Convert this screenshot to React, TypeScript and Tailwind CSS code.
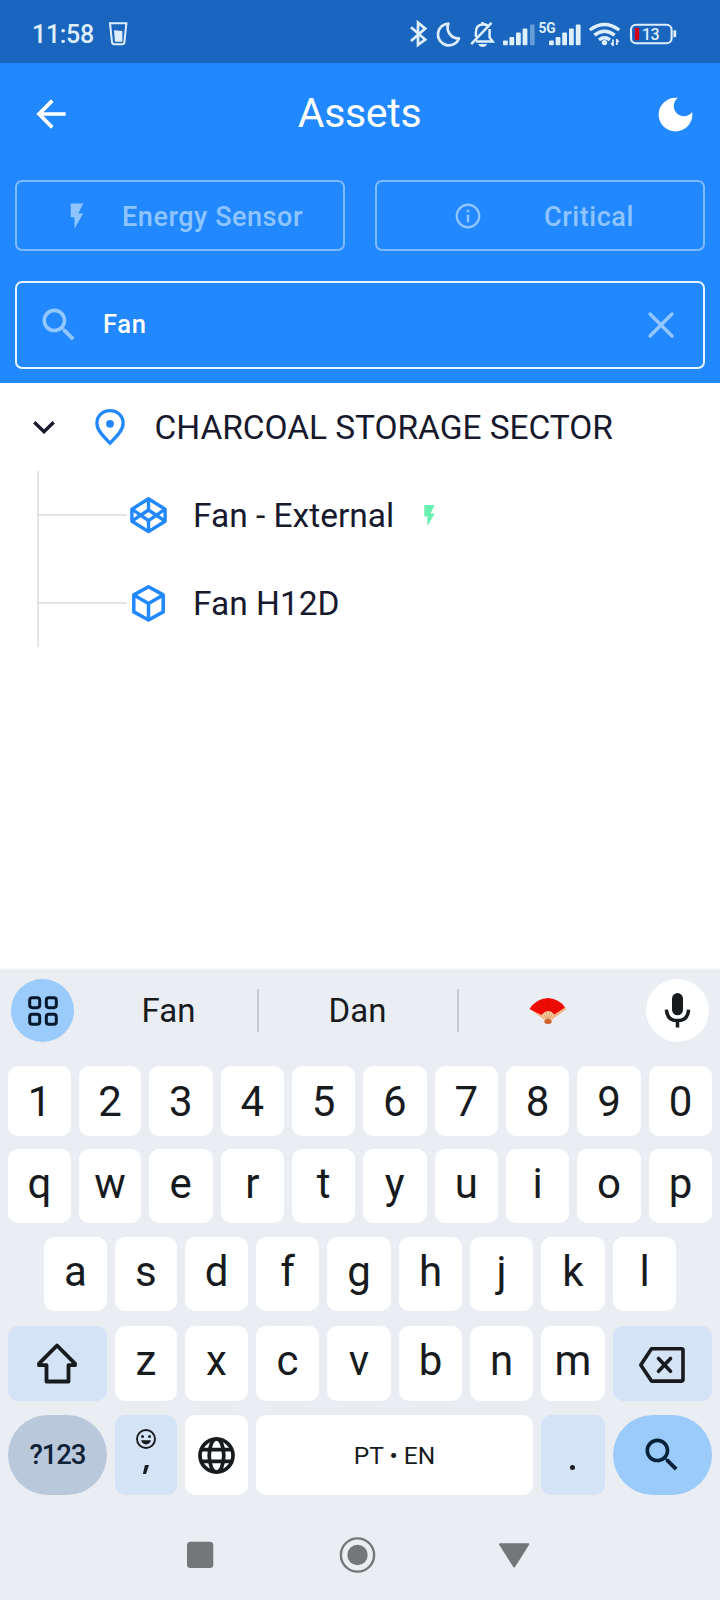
import React from "react";

function StatusBar() {
  return (
    <div className="flex h-[63px] items-start bg-[#1a66bf] pl-8 pt-4 text-[#dfeefc]">
      <span className="h-9 w-[63px] whitespace-nowrap text-[25px] font-medium leading-[38px] tracking-[-0.3px]">11:58</span>
      <svg className="ml-[10px]" width="26" height="36" viewBox="105 16 26 36" fill="none" stroke="currentColor">
        <path d="M110 23.2H126.4L124.4 42.2Q124.2 44.2 122 44.2H114.4Q112.2 44.2 112 42.2Z" strokeWidth="2" />
        <path d="M114 30.3L122.4 31V41.8H115Z" fill="currentColor" stroke="none" />
      </svg>
      <div className="ml-[275px] flex">
        <svg width="28" height="36" viewBox="406 16 28 36" fill="none" stroke="currentColor" strokeWidth="2.7">
          <path d="M411 27.3L425.2 39.6L418 44.8V22.7L425.2 28.6L411 40.9" />
        </svg>
        <svg width="32" height="36" viewBox="434 16 32 36" fill="none" stroke="currentColor" strokeWidth="2.7" strokeLinejoin="round">
          <path d="M448.4 23.6A10.9 10.9 0 1 0 459 38.4A10.8 10.8 0 0 1 448.4 23.6Z" />
        </svg>
        <svg width="34" height="36" viewBox="466 16 34 36" fill="none" stroke="currentColor" strokeWidth="2.5">
          <path d="M471.2 44.2L491.5 22.8M475.9 37V32Q476 24.8 482.5 24.4Q485.5 24.2 487.6 25.6M489.6 29V37.4L492.6 41.6H476" />
          <path d="M478.3 44H487Q486 47 482.6 47T478.3 44Z" fill="currentColor" stroke="none" />
          <path d="M482.5 22V25" />
        </svg>
        <svg width="86" height="36" viewBox="500 16 86 36" fill="currentColor">
          <rect x="503" y="40.4" width="4.8" height="4.8" rx="1" />
          <rect x="509.4" y="37" width="4.8" height="8.2" rx="1" />
          <rect x="516" y="32.6" width="4.8" height="12.6" rx="1" />
          <rect x="522.6" y="28.6" width="4.8" height="16.6" rx="1" />
          <rect x="530" y="24.4" width="4.6" height="20.8" rx="1" opacity="0.4" />
          <text x="538.4" y="33.2" fontSize="13.8" fontWeight="700">5G</text>
          <rect x="549" y="40.4" width="4.8" height="4.8" rx="1" />
          <rect x="555.6" y="37" width="4.8" height="8.2" rx="1" />
          <rect x="562.2" y="32.6" width="4.8" height="12.6" rx="1" />
          <rect x="569" y="28.6" width="4.8" height="16.6" rx="1" />
          <rect x="575.8" y="24.4" width="4.8" height="20.8" rx="1" />
        </svg>
        <svg width="40" height="36" viewBox="586 16 40 36" fill="none" stroke="currentColor" strokeWidth="3.4">
          <path d="M589.8 30Q604.5 19 619.2 30M594.4 35.2Q604.5 27.2 614.6 35.2M599 39.8Q604.5 35.6 610 39.8" />
          <circle cx="604.5" cy="42.6" r="2.7" fill="currentColor" stroke="none" />
          <path d="M613 39.5V46M616.8 39V45M611 43L613.5 45.6M618.8 42L616.6 39.6" strokeWidth="1.7" />
        </svg>
        <svg width="54" height="36" viewBox="626 16 54 36">
          <rect x="631" y="24.8" width="40.6" height="18.4" rx="5" fill="none" stroke="currentColor" strokeWidth="2.1" />
          <rect x="673.4" y="30.3" width="2.8" height="7" rx="1" fill="currentColor" />
          <rect x="634.8" y="27.8" width="4.4" height="12.4" rx="1.4" fill="#d0021b" />
          <text x="642" y="39.8" fontSize="16" fontWeight="500" fill="currentColor" textLength="17.5">13</text>
        </svg>
      </div>
    </div>
  );
}

function Bolt({ size }: { size: number }) {
  return (
    <svg width={size} height={size} viewBox="0 0 24 24" fill="currentColor">
      <path d="M7 2v11h3v9l7-12h-4l4-8z" />
    </svg>
  );
}

function SearchIcon({ size }: { size: number }) {
  return (
    <svg width={size} height={size} viewBox="0 0 24 24" fill="currentColor">
      <path d="M15.5 14h-.79l-.28-.27C15.41 12.59 16 11.11 16 9.5 16 5.91 13.09 3 9.5 3S3 5.91 3 9.5 5.91 16 9.5 16c1.61 0 3.09-.59 4.23-1.57l.27.28v.79l5 4.99L20.49 19l-4.99-5zm-6 0C7.01 14 5 11.99 5 9.5S7.01 5 9.5 5 14 7.01 14 9.5 11.99 14 9.5 14z" />
    </svg>
  );
}

function Header() {
  return (
    <header className="h-80 bg-[#2188ff] px-[15px]">
      <div className="flex h-[102px] items-center justify-between pl-[14px] pr-[7px] text-white">
        <svg width="44" height="44" viewBox="0 0 24 24" fill="currentColor">
          <path d="M20 11H7.83l5.59-5.59L12 4l-8 8 8 8 1.41-1.41L7.83 13H20v-2z" />
        </svg>
        <h1 className="-mt-0.5 mr-[7px] text-[41px] leading-none tracking-[-0.3px]">Assets</h1>
        <svg width="45" height="45" viewBox="0 0 24 24" fill="currentColor">
          <path d="M12 3c-4.97 0-9 4.03-9 9s4.03 9 9 9 9-4.03 9-9c0-.46-.04-.92-.1-1.36-.98 1.37-2.58 2.26-4.4 2.26-2.98 0-5.4-2.42-5.4-5.4 0-1.81.89-3.42 2.26-4.4-.44-.06-.9-.1-1.36-.1z" />
        </svg>
      </div>
      <div className="mt-[15px] grid grid-cols-2 gap-[30px] text-[27px] font-medium tracking-[0.55px] text-[#8ec5ff]">
        <button className="flex h-[71px] items-center rounded-[7px] border-2 border-[#7dbcff] pl-[45px]">
          <Bolt size={30} />
          <span className="ml-[30px] whitespace-nowrap pt-[3px]">Energy Sensor</span>
        </button>
        <button className="flex h-[71px] items-center rounded-[7px] border-2 border-[#7dbcff] pl-[76px]">
          <svg width="30" height="30" viewBox="0 0 24 24" fill="currentColor">
            <path d="M11 7h2v2h-2zm0 4h2v6h-2zm1-9C6.48 2 2 6.48 2 12s4.48 10 10 10 10-4.48 10-10S17.52 2 12 2zm0 18c-4.41 0-8-3.59-8-8s3.59-8 8-8 8 3.59 8 8-3.59 8-8 8z" />
          </svg>
          <span className="ml-[61px] pt-[3px]">Critical</span>
        </button>
      </div>
      <div className="mt-[30px] flex h-[88px] items-center rounded-[7px] border-2 border-[#e6f5ff] pl-5 pr-7 text-[#93c7ff]">
        <SearchIcon size={44} />
        <span className="ml-[22px] flex-1 pb-0.5 text-[25.5px] font-medium tracking-[0.7px] text-white">Fan</span>
        <svg width="28" height="28" viewBox="0 0 28 28" stroke="currentColor" strokeWidth="3.4" strokeLinecap="round">
          <path d="M3 3L25 25M25 3L3 25" />
        </svg>
      </div>
    </header>
  );
}

function AssetRow({ label, icon, extra }: { label: string; icon: React.ReactNode; extra?: React.ReactNode }) {
  return (
    <div className="flex h-[88px] items-center">
      <div className="h-0.5 w-[88px] bg-[#e4e4e4]" />
      <div className="flex w-[43px] justify-center">{icon}</div>
      <span className="ml-[23px] whitespace-nowrap pt-0.5">{label}</span>
      {extra}
    </div>
  );
}

function AssetTree() {
  return (
    <main className="h-[587px] bg-white text-[33.5px] text-[#17192d]">
      <div className="flex h-[88px] items-center pl-[33px]">
        <svg width="22" height="14" viewBox="0 0 22 14" fill="none" stroke="currentColor" strokeWidth="3.4">
          <path d="M1.3 2.3L11 11.7L20.7 2.3" />
        </svg>
        <svg className="ml-10" width="30" height="38" viewBox="0 0 30 38" fill="none" stroke="#2188ff" strokeWidth="3.3">
          <path d="M15 35.2C7 27 1.9 21.8 1.9 15.2C1.9 7.9 7.7 2.6 15 2.6S28.1 7.9 28.1 15.2C28.1 21.8 23 27 15 35.2Z" />
          <circle cx="15" cy="15.8" r="3.9" fill="#2188ff" stroke="none" />
        </svg>
        <span className="ml-[29.5px] whitespace-nowrap pt-0.5 tracking-[-0.06px]">CHARCOAL STORAGE SECTOR</span>
      </div>
      <div className="ml-[37px] flex">
        <div className="w-0.5 self-stretch bg-[#e4e4e4]" />
        <div className="flex-1">
          <AssetRow
            label="Fan - External"
            icon={
              <svg width="38" height="38" viewBox="0.5 0 38 38" fill="none" stroke="#2188ff" strokeWidth="3.4" strokeLinejoin="round">
                <path d="M19 2.8L35.6 13.2V25.2L19 35.6L2.4 25.2V13.2Z" />
                <path d="M19 2.8V14M19 24.7V35.6M2.4 13.2L19 24.7L35.6 13.2M2.4 25.2L19 14L35.6 25.2" />
              </svg>
            }
            extra={<span className="ml-[23px] text-[#67f0b0]"><Bolt size={25} /></span>}
          />
          <AssetRow
            label="Fan H12D"
            icon={
              <svg width="38" height="38" viewBox="0.5 0 38 38" fill="none" stroke="#2188ff" strokeWidth="3.5" strokeLinejoin="round">
                <path d="M19 2.8L33.7 10.9V27.9L19 36L4.3 27.9V10.9Z" />
                <path d="M4.3 10.9L19 19.4L33.7 10.9M19 19.4V36" />
              </svg>
            }
          />
        </div>
      </div>
    </main>
  );
}

function Suggestions() {
  return (
    <div className="flex h-[63px] items-center px-[11px] text-[33px]">
      <div className="flex size-[63px] items-center justify-center rounded-full bg-[#9bcbfb]">
        <svg width="30" height="30" viewBox="0 0 30 30" fill="none" stroke="#06192c" strokeWidth="3">
          <rect x="1.7" y="1.7" width="10" height="10" rx="2.6" />
          <rect x="18.3" y="1.7" width="10" height="10" rx="2.6" />
          <rect x="1.7" y="18.3" width="10" height="10" rx="2.6" />
          <rect x="18.3" y="18.3" width="10" height="10" rx="2.6" />
        </svg>
      </div>
      <span className="ml-[6px] w-[177px] pt-px text-center">Fan</span>
      <div className="h-[43px] w-0.5 bg-[#c6c9cd]" />
      <span className="w-[198px] pr-px pt-px text-center">Dan</span>
      <div className="h-[43px] w-0.5 bg-[#c6c9cd]" />
      <div className="flex flex-1 justify-center pr-[9px]">
        <svg width="38" height="28" viewBox="0 0 38 28">
          <path d="M0.5 12L17 24L21 24L37.5 12L34.5 9.5L19 17Z" fill="#f5b780" />
          <path d="M0.5 12Q6.5 2 19 1Q31 2 36 10.5L24.5 18Q19 12 13 18.2Z" fill="#f10b05" />
          <path d="M12.7 17.8Q19 10.5 25.2 17.2L20.5 24H17.3Z" fill="#f8d0a5" />
          <path d="M6.5 6.5L14 16M12 3L16.5 14M19 1V13.5M26 3L21.5 14M31.5 6.5L24 16" stroke="#c90d08" strokeWidth="0.7" />
          <path d="M14.5 17L18 23M17.5 15L18.5 23M20.7 15L19.5 23M23.5 16.7L20 23" stroke="#ce8250" strokeWidth="0.7" />
          <ellipse cx="19" cy="24.5" rx="3.7" ry="2.5" fill="#ce622d" />
        </svg>
      </div>
      <div className="flex size-[63px] items-center justify-center rounded-full bg-white">
        <svg width="28" height="36" viewBox="0.5 0.8 28 36" fill="none" stroke="#171b1e">
          <rect x="8.5" y="0.9" width="11" height="22.2" rx="5.5" fill="#171b1e" stroke="none" />
          <path d="M2.9 17.4Q3.5 28.4 14 28.4T25.1 17.4M14 28.4V35.4" strokeWidth="3.5" />
        </svg>
      </div>
    </div>
  );
}

function Key({ children, className = "bg-white" }: { children?: React.ReactNode; className?: string }) {
  return <div className={"flex h-full items-center justify-center rounded-[10px] " + className}>{children}</div>;
}

const TEN_COLUMNS = "grid-cols-[63px_62px_63.5px_63.5px_63px_63.5px_63.5px_63px_64px_63px]";

function Keyboard() {
  return (
    <section className="h-[630px] bg-[#eaedf2] pt-[9px] text-[#171b1e] shadow-[0_0_3px_#d9dce0]">
      <Suggestions />
      <div className="px-2 pt-6 text-[42px] leading-none">
        <div className={"grid h-[70px] gap-2 " + TEN_COLUMNS}>
          {"1234567890".split("").map((k) => <Key key={k} className="bg-white pt-0.5">{k}</Key>)}
        </div>
        <div className={"mt-[13px] grid h-[74px] gap-2 " + TEN_COLUMNS}>
          {"qwertyuiop".split("").map((k) => <Key key={k} className="bg-white pb-[4px]">{k}</Key>)}
        </div>
        <div className="mt-[14px] grid h-[74px] grid-cols-[62.7px_62.3px_63px_63px_64px_63px_63px_64px_63px] gap-2 pl-9">
          {"asdfghjkl".split("").map((k) => <Key key={k} className="bg-white pb-[5px]">{k}</Key>)}
        </div>
        <div className="mt-[15px] grid h-[75px] grid-cols-[98.7px_62.3px_63px_63px_64px_63px_63px_64px_99px] gap-2">
          <Key className="bg-[#d5e3f6] pb-px">
            <svg width="42" height="42" viewBox="0 0 42 42" fill="none" stroke="currentColor" strokeWidth="3.8" strokeLinejoin="round">
              <path d="M21 3.5L39 21.6V23.2H32.5V39.5H10.5V23.2H3V21.6Z" />
            </svg>
          </Key>
          {"zxcvbnm".split("").map((k) => <Key key={k} className="bg-white pb-[5px]">{k}</Key>)}
          <Key className="bg-[#d5e3f6]">
            <svg width="48" height="38" viewBox="0 -1.5 48 38" fill="none" stroke="currentColor" strokeWidth="3.6" strokeLinejoin="round" strokeLinecap="round">
              <path d="M13.5 2.2H43.5Q45 2.2 45 3.7V33.1Q45 34.6 43.5 34.6H13.5L2.8 18.4Z" />
              <path d="M20.5 12L32.5 24.8M32.5 12L20.5 24.8" />
            </svg>
          </Key>
        </div>
        <div className="mt-[14px] grid h-20 grid-cols-[98.7px_62.3px_63px_277px_64px_99px] gap-2">
          <div className="flex items-center justify-center rounded-full bg-[#b9c8da] text-[27.5px] font-medium tracking-[-1.1px] text-[#102238]">?123</div>
          <Key className="flex-col bg-[#d5e3f6]">
            <svg className="-mt-[7px]" width="20" height="20" viewBox="0 0 20 20" fill="currentColor">
              <circle cx="10" cy="10" r="9" fill="none" stroke="currentColor" strokeWidth="1.9" />
              <circle cx="6.5" cy="7.6" r="1.5" />
              <circle cx="13.5" cy="7.6" r="1.5" />
              <path d="M5 11.3H15Q13.8 15.4 10 15.4T5 11.3Z" />
            </svg>
            <svg className="mt-4" width="8" height="10" viewBox="0 0 8 10" fill="currentColor">
              <path d="M3 0H7L4 9H0.8Z" />
            </svg>
          </Key>
          <Key>
            <svg width="38" height="38" viewBox="-0.5 -0.5 38 38" fill="none" stroke="currentColor" strokeWidth="3.7">
              <circle cx="19" cy="19" r="16.5" />
              <ellipse cx="19" cy="19" rx="7.3" ry="16.5" />
              <path d="M3.5 13.2H34.5M3.5 24.8H34.5" />
            </svg>
          </Key>
          <Key><span className="pt-0.5 text-[24.5px]">PT • EN</span></Key>
          <Key className="bg-[#d5e3f6]"><span className="mt-[25px] size-[5px] rounded-full bg-current" /></Key>
          <div className="flex items-center justify-center rounded-full bg-[#9bcbfb] text-[#062239]"><SearchIcon size={44} /></div>
        </div>
      </div>
      <nav className="mt-7 flex h-[63px] items-center justify-center text-[#757678]">
        <svg width="360" height="38" viewBox="180 1535.5 360 38" fill="currentColor">
          <rect x="187" y="1541.3" width="26.3" height="26.3" rx="3.5" />
          <circle cx="357.5" cy="1554.5" r="16.6" fill="none" stroke="currentColor" strokeWidth="2.4" />
          <circle cx="357.5" cy="1554.5" r="10.2" />
          <path d="M500 1543.8H528.3L514.2 1566Z" stroke="currentColor" strokeWidth="2" strokeLinejoin="round" />
        </svg>
      </nav>
    </section>
  );
}

export default function App() {
  return (
    <div className="flex h-[1600px] w-[720px] flex-col overflow-hidden bg-white font-['Roboto',sans-serif]">
      <StatusBar />
      <Header />
      <AssetTree />
      <Keyboard />
    </div>
  );
}
